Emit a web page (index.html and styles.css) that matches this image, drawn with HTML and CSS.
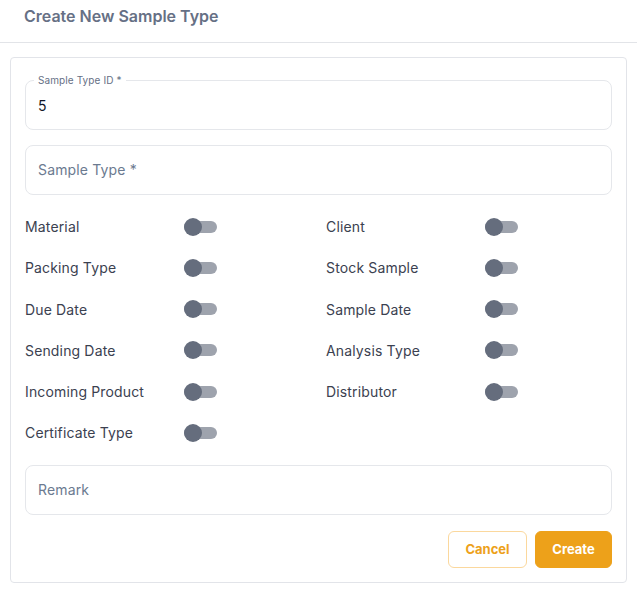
FILE: index.html
```html
<!DOCTYPE html>
<html>
<head>
<meta charset="utf-8">
<link rel="stylesheet" href="styles.css">
</head>
<body>
<header class="header"><h1 class="title">Create New Sample Type</h1></header>
<main class="wrap">
  <form class="card">
    <div class="field filled">
      <span class="float-label">Sample Type ID *</span>
      <span class="value">5</span>
    </div>
    <div class="field">
      <span class="placeholder">Sample Type *</span>
    </div>
    <div class="toggles">
      <div class="row"><span class="lbl">Material</span><span class="switch"><span class="knob"></span></span></div>
      <div class="row"><span class="lbl">Client</span><span class="switch"><span class="knob"></span></span></div>
      <div class="row"><span class="lbl">Packing Type</span><span class="switch"><span class="knob"></span></span></div>
      <div class="row"><span class="lbl">Stock Sample</span><span class="switch"><span class="knob"></span></span></div>
      <div class="row"><span class="lbl">Due Date</span><span class="switch"><span class="knob"></span></span></div>
      <div class="row"><span class="lbl">Sample Date</span><span class="switch"><span class="knob"></span></span></div>
      <div class="row"><span class="lbl">Sending Date</span><span class="switch"><span class="knob"></span></span></div>
      <div class="row"><span class="lbl">Analysis Type</span><span class="switch"><span class="knob"></span></span></div>
      <div class="row"><span class="lbl">Incoming Product</span><span class="switch"><span class="knob"></span></span></div>
      <div class="row"><span class="lbl">Distributor</span><span class="switch"><span class="knob"></span></span></div>
      <div class="row"><span class="lbl">Certificate Type</span><span class="switch"><span class="knob"></span></span></div>
    </div>
    <div class="field">
      <span class="placeholder">Remark</span>
    </div>
    <div class="actions">
      <button type="button" class="btn btn-cancel">Cancel</button>
      <button type="button" class="btn btn-create">Create</button>
    </div>
  </form>
</main>
</body>
</html>
```
FILE: styles.css
```css
* { box-sizing: border-box; }
html, body { margin: 0; padding: 0; background: #fff; }
body { font-family: Inter, "Noto Sans", "Liberation Sans", sans-serif; color: #374151; }

.header {
  height: 43px;
  border-bottom: 1px solid #e2e4e8;
  padding: 6px 24px 0;
}
.title {
  margin: 0;
  font-size: 16px;
  line-height: 20px;
  font-weight: 600;
  color: #667085;
}

.wrap { padding: 14px 10px 0; }

.card {
  border: 1px solid #e2e4e9;
  border-radius: 4px;
  padding: 22px 14px 14px;
  height: 526px;
  display: flex;
  flex-direction: column;
}

.field {
  position: relative;
  height: 50px;
  flex: none;
  border: 1px solid #e5e7eb;
  border-radius: 8px;
  padding: 0 12px 1px;
  display: flex;
  align-items: center;
}
.field + .field { margin-top: 15px; }

.float-label {
  position: absolute;
  left: 8px;
  top: -7px;
  padding: 0 4px;
  background: #fff;
  font-size: 10px;
  line-height: 12px;
  letter-spacing: 0.1px;
  color: #667085;
}
.value { font-size: 14px; color: #111827; padding-top: 2px; }
.placeholder { font-size: 14px; color: #6b7a90; letter-spacing: 0.15px; }

.toggles {
  display: grid;
  grid-template-columns: 285px 285px;
  column-gap: 16px;
  row-gap: 17.25px;
  margin: 19.6px 0 20.4px;
}
.row {
  display: flex;
  align-items: center;
  height: 24px;
}
.lbl {
  width: 159px;
  font-size: 14px;
  letter-spacing: 0.15px;
  color: #3b4150;
}
.switch {
  position: relative;
  width: 33px;
  height: 12px;
  border-radius: 6px;
  background: #9ea3ad;
}
.knob {
  position: absolute;
  left: 0;
  top: -3px;
  width: 18px;
  height: 18px;
  border-radius: 50%;
  background: #656d7d;
}

.actions {
  margin-top: 15.5px;
  display: flex;
  justify-content: flex-end;
  gap: 8px;
}
.btn {
  height: 37px;
  border-radius: 6px;
  font-family: Inter, "Noto Sans", "Liberation Sans", sans-serif;
  font-size: 13px;
  font-weight: 700;
  padding: 0;
  cursor: pointer;
}
.btn-cancel {
  width: 79px;
  background: #fff;
  border: 1px solid #fbd89d;
  color: #eda11a;
}
.btn-create {
  width: 77px;
  background: #eda11a;
  border: 1px solid #eda11a;
  color: #fff;
}
```
